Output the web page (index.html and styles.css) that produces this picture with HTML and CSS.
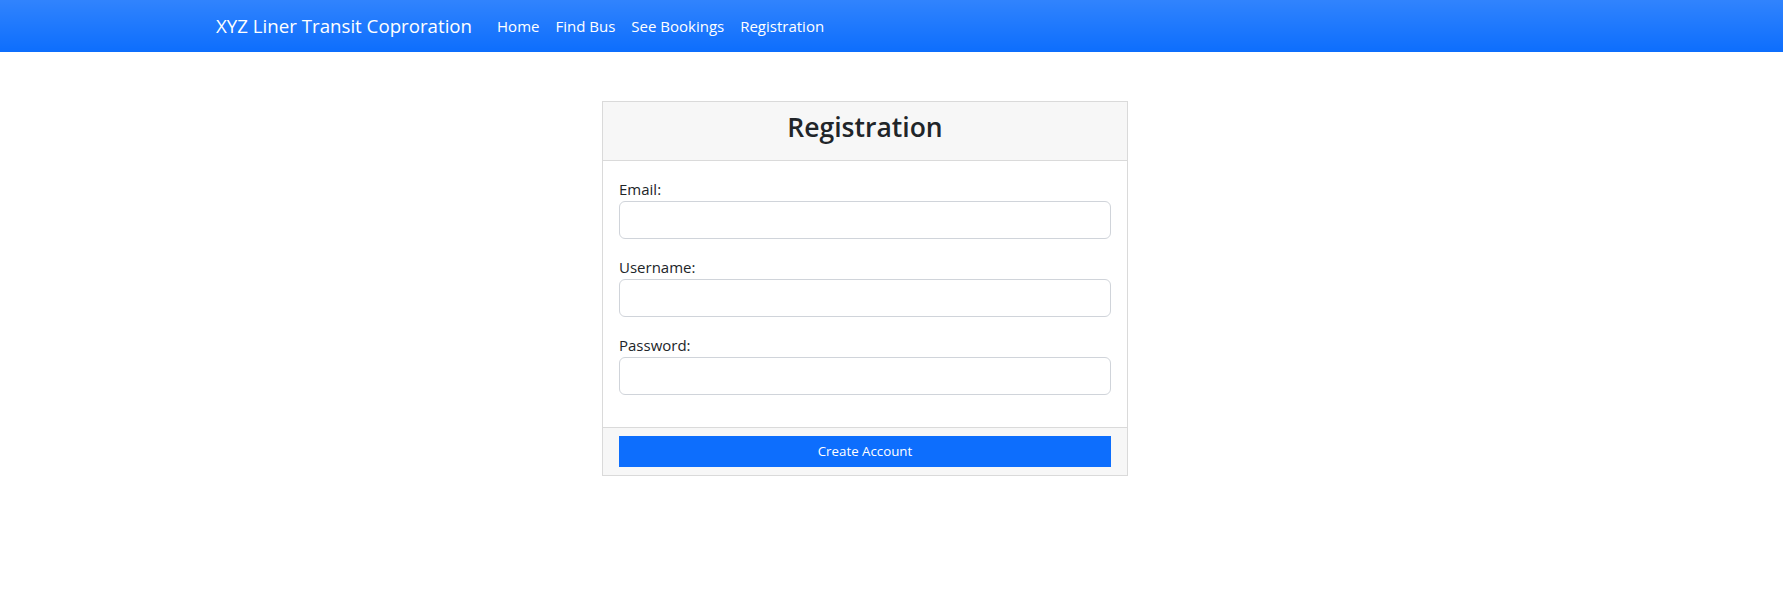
FILE: index.html
```html
<!DOCTYPE html>
<html lang="en">
<head>
<meta charset="utf-8">
<title>Registration</title>
<link rel="stylesheet" href="styles.css">
</head>
<body>
<nav class="navbar">
  <div class="nav-inner">
    <a class="brand" href="#">XYZ Liner Transit Coproration</a>
    <ul class="nav-links">
      <li><a href="#">Home</a></li>
      <li><a href="#">Find Bus</a></li>
      <li><a href="#">See Bookings</a></li>
      <li><a href="#">Registration</a></li>
    </ul>
  </div>
</nav>
<main class="page">
  <form class="card">
    <div class="card-header"><h3>Registration</h3></div>
    <div class="card-body">
      <div class="field">
        <label for="email">Email:</label>
        <input id="email" type="email" class="input">
      </div>
      <div class="field">
        <label for="username">Username:</label>
        <input id="username" type="text" class="input">
      </div>
      <div class="field">
        <label for="password">Password:</label>
        <input id="password" type="password" class="input">
      </div>
    </div>
    <div class="card-footer">
      <button type="button" class="btn">Create Account</button>
    </div>
  </form>
</main>
</body>
</html>
```
FILE: styles.css
```css
* { box-sizing: border-box; }
html, body { margin: 0; padding: 0; }
body {
  font-family: "Open Sans", "Noto Sans", sans-serif;
  font-size: 15px;
  line-height: 1.5;
  color: #212529;
  background: #fff;
}
.navbar {
  height: 52px;
  background: #0d6efd linear-gradient(180deg, rgba(255,255,255,.15), rgba(255,255,255,0));
  display: flex;
  align-items: center;
}
.nav-inner {
  display: flex;
  align-items: center;
  padding-left: 216px;
}
.brand {
  color: #fff;
  text-decoration: none;
  font-size: 18.7px;
  line-height: 30px;
  margin-right: 17px;
}
.nav-links {
  display: flex;
  list-style: none;
  margin: 0;
  padding: 0;
}
.nav-links a {
  display: block;
  color: #fff;
  text-decoration: none;
  font-size: 15px;
  line-height: 24px;
  padding: 0 8px;
}
.page {
  padding: 49px 0 0 602px;
}
.card {
  width: 526px;
  border: 1px solid #dadada;
  background: #fff;
  margin: 0;
}
.card-header {
  background: #f7f7f7;
  border-bottom: 1px solid #dadada;
  padding: 8px 16px;
  text-align: center;
}
.card-header h3 {
  margin: 0 0 8px;
  font-size: 26.5px;
  font-weight: 600;
  line-height: 34px;
}
.card-body {
  padding: 16px;
}
.field { margin-bottom: 16px; }
.field label {
  display: block;
  font-size: 15px;
  line-height: 24px;
}
.input {
  display: block;
  width: 100%;
  height: 38px;
  border: 1px solid #d0d4da;
  border-radius: 6px;
  background: #fff;
  font: inherit;
  padding: 6px 12px;
}
.card-footer {
  background: #f7f7f7;
  border-top: 1px solid #dadada;
  padding: 8px 16px;
}
.btn {
  display: block;
  width: 100%;
  height: 31px;
  border: 0;
  border-radius: 0;
  background: #0d6efd;
  color: #fff;
  font-family: inherit;
  font-size: 13.3px;
  line-height: 21px;
  padding: 4px 8px;
}
```
